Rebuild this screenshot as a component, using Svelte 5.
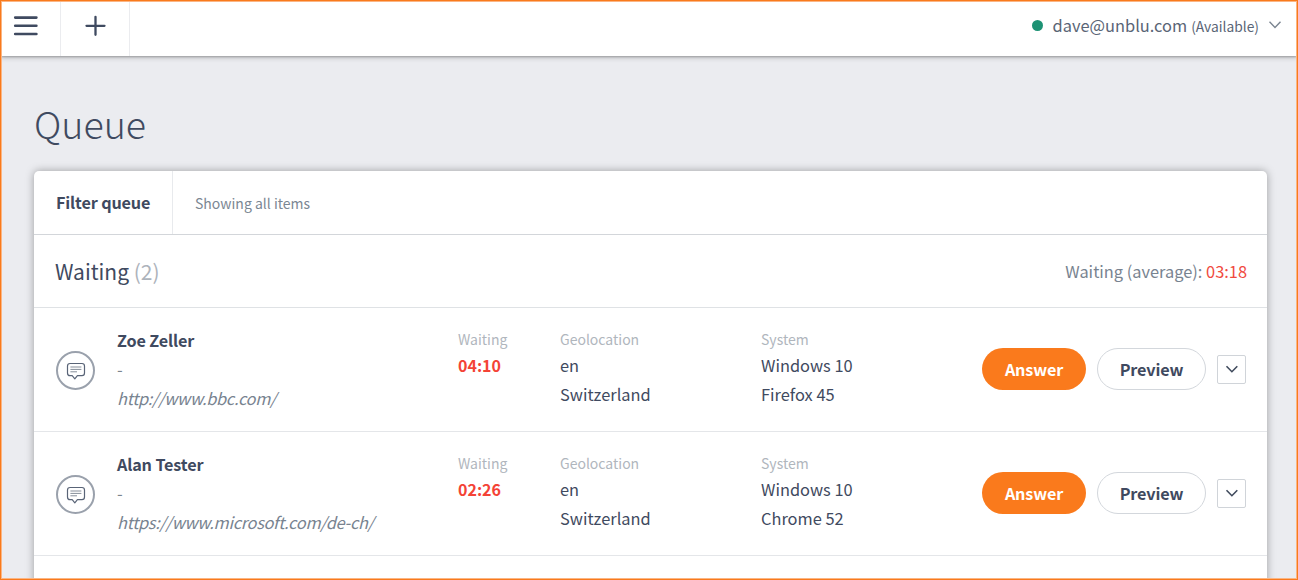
<script>
  const items = [
    { name: 'Zoe Zeller', url: 'http://www.bbc.com/', time: '04:10', lang: 'en', country: 'Switzerland', os: 'Windows 10', browser: 'Firefox 45' },
    { name: 'Alan Tester', url: 'https://www.microsoft.com/de-ch/', time: '02:26', lang: 'en', country: 'Switzerland', os: 'Windows 10', browser: 'Chrome 52' },
  ];
</script>

<div class="window">
  <header class="topbar">
    <button class="tool menu" aria-label="Menu">
      <svg width="26" height="22" viewBox="0 0 26 22"><path d="M2.2 2.6H23.4M2.2 10.8H23.4M2.2 19H23.4" stroke="#3f4a60" stroke-width="2.6" stroke-linecap="round" /></svg>
    </button>
    <button class="tool add" aria-label="Add">
      <svg width="22" height="22" viewBox="0 0 22 22"><path d="M2.5 10.8H20.5M11.5 1.8V19.8" stroke="#3f4a60" stroke-width="2.3" stroke-linecap="round" /></svg>
    </button>
    <div class="account">
      <span class="dot"></span>
      <span class="mail">dave@unblu.com</span>
      <span class="status">(Available)</span>
      <svg width="14" height="10" viewBox="0 0 14 10"><path d="M1.5 1.8 7 7.4 12.5 1.8" fill="none" stroke="#7a8490" stroke-width="1.4" /></svg>
    </div>
  </header>
  <h1>Queue</h1>
  <main class="card">
    <div class="filter">
      <div class="filter-name"><span>Filter queue</span></div>
      <div class="filter-info"><span>Showing all items</span></div>
    </div>
    <div class="section">
      <div class="section-title"><span>Waiting</span> <span class="count">(2)</span></div>
      <div class="average"><span>Waiting (average):</span> <span class="red">03:18</span></div>
    </div>
    {#each items as item}
      <div class="row">
        <div class="badge">
          <svg width="20" height="18" viewBox="0 0 20 18" fill="none">
            <path d="M4 1.5H16Q18.5 1.5 18.5 4V11Q18.5 13.7 16 13.7H11.4L8.8 16.8 6.2 13.7H4Q1.5 13.7 1.5 11V4Q1.5 1.5 4 1.5Z" stroke="#596477" stroke-width="1.2" stroke-linejoin="round" />
            <path d="M4.4 5H15.4M4.4 7.4H15.4M4.4 9.8H11" stroke="#858d99" stroke-width="1" />
          </svg>
        </div>
        <div class="person">
          <div class="name"><span>{item.name}</span></div>
          <div class="dash">-</div>
          <div class="url"><span>{item.url}</span></div>
        </div>
        <div class="col wait">
          <div class="label"><span>Waiting</span></div>
          <div class="time"><span>{item.time}</span></div>
        </div>
        <div class="col geo">
          <div class="label"><span>Geolocation</span></div>
          <div><span>{item.lang}</span></div>
          <div><span>{item.country}</span></div>
        </div>
        <div class="col sys">
          <div class="label"><span>System</span></div>
          <div><span>{item.os}</span></div>
          <div><span>{item.browser}</span></div>
        </div>
        <div class="actions">
          <button class="pill answer">Answer</button>
          <button class="pill preview">Preview</button>
          <button class="more" aria-label="More">
            <svg width="14" height="10" viewBox="0 0 14 10"><path d="M1.5 2.3 6.9 7.7 12.3 2.3" fill="none" stroke="#3f4a5c" stroke-width="1.6" /></svg>
          </button>
        </div>
      </div>
    {/each}
  </main>
</div>

<style>
  :global(body) { margin: 0; overflow: hidden; }
  .window, .window * { box-sizing: border-box; }
  .window {
    height: 580px; overflow: hidden; display: flex; flex-direction: column;
    border: 1px solid #f97a1c;
    background: #ebecf0; color: #3f4a60;
    font-family: "Noto Sans CJK SC", "Noto Sans", sans-serif;
    font-size: 16.4px; line-height: 28.6px; position: relative;
  }
  .window::after {
    content: ''; position: absolute; inset: 0; pointer-events: none;
    border: 1px solid #fbb583;
  }
  button { font: inherit; color: inherit; background: none; border: 0; padding: 0; display: flex; align-items: center; justify-content: center; }
  .topbar { flex: none; display: flex; height: 55px; background: #fff; box-shadow: 0 1px 2px rgba(0,0,0,.24), 0 2px 5px rgba(0,0,0,.18); }
  .tool { border-right: 1px solid #ebecef; padding-bottom: 6px; }
  .menu { width: 60px; padding-right: 9px; }
  .add { width: 69px; }
  .account { margin-left: auto; display: flex; align-items: center; padding: 0 15px 7px 0; color: #5a6576; white-space: nowrap; }
  .dot { width: 11px; height: 11px; border-radius: 50%; background: #1d9274; margin-right: 10px; }
  .mail { font-size: 16.4px; margin-right: 4px; }
  .status { font-size: 13.8px; margin-right: 9px; padding-top: 2px; }
  h1 { flex: none; margin: 42px 0 0 33px; font-size: 37.6px; font-weight: 200; line-height: 50px; height: 73px; }
  .card { flex: none; width: 1233px; height: 440px; margin-left: 33px; background: #fff; border-radius: 5px 5px 0 0; box-shadow: 0 0 9px rgba(0,0,0,.34); }
  .filter { display: flex; height: 64px; border-bottom: 1px solid #d3d6da; }
  .filter-name { width: 139px; padding-left: 22px; border-right: 1px solid #e8eaed; font-weight: 700; font-size: 16.2px; letter-spacing: -0.14px; line-height: 63px; }
  .filter-info { padding-left: 22px; font-size: 14px; line-height: 64px; color: #7b8793; }
  .section { display: flex; justify-content: space-between; height: 73px; padding: 0 20px 0 21px; border-bottom: 1px solid #dfe2e5; line-height: 73px; }
  .section-title { font-size: 21px; }
  .count { color: #adb3bb; }
  .average { color: #788390; }
  .red { color: #f04a3e; }
  .row { display: flex; height: 124px; border-bottom: 1px solid #e4e6e9; padding-left: 22px; white-space: nowrap; }
  .badge { width: 39px; height: 39px; margin: 43px 22px 0 0; border: 2px solid #9aa1ac; border-radius: 50%; display: flex; align-items: center; justify-content: center; }
  .person { width: 341px; padding-top: 18px; }
  .name { font-weight: 700; font-size: 16.2px; letter-spacing: -0.14px; }
  .dash { color: #7b858f; }
  .url { font-style: italic; color: #788390; letter-spacing: -0.32px; padding-top: 1px; }
  .col { padding-top: 18px; }
  .wait { width: 102px; }
  .geo { width: 201px; }
  .sys { width: 221px; }
  .label { font-size: 14px; line-height: 27px; height: 25px; color: #b0b6bd; }
  .time { font-weight: 700; font-size: 16px; color: #f44336; }
  .actions { display: flex; align-items: center; gap: 11px; padding-bottom: 1px; }
  .pill { height: 42px; border-radius: 21px; font-weight: 700; font-size: 16.2px; letter-spacing: -0.14px; }
  .answer { width: 104px; background: #fa7a1c; color: #fff; }
  .preview { width: 109px; border: 1px solid #d3d7dc; }
  .more { width: 29px; height: 29px; border: 1px solid #d0d4d9; border-radius: 2px; }
</style>
